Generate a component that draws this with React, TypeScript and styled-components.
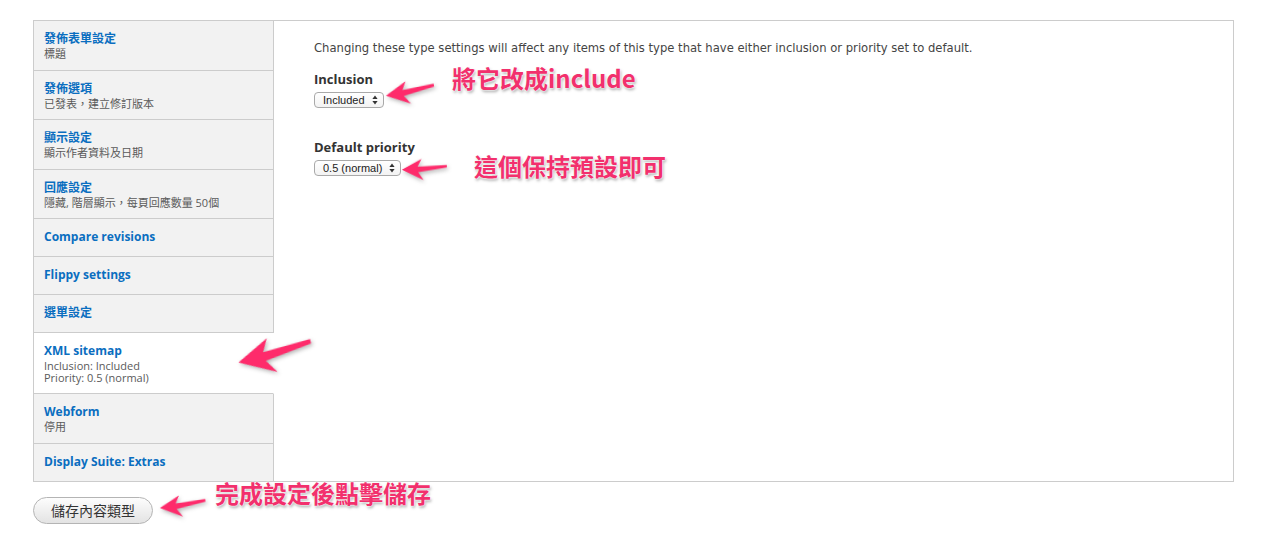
import { Fragment } from "react";
import styled, { createGlobalStyle } from "styled-components";

const GlobalStyle = createGlobalStyle`
  html, body {
    margin: 0;
    padding: 0;
    background: #fff;
  }
  body {
    font-family: "Open Sans", "Noto Sans CJK TC", sans-serif;
    color: #333;
  }
`;

interface TabItem {
  title: string;
  lines: string[];
  active?: boolean;
}

const tabs: TabItem[] = [
  { title: "發佈表單設定", lines: ["標題"] },
  { title: "發佈選項", lines: ["已發表，建立修訂版本"] },
  { title: "顯示設定", lines: ["顯示作者資料及日期"] },
  { title: "回應設定", lines: ["隱藏, 階層顯示，每頁回應數量 50個"] },
  { title: "Compare revisions", lines: [] },
  { title: "Flippy settings", lines: [] },
  { title: "選單設定", lines: [] },
  {
    title: "XML sitemap",
    lines: ["Inclusion: Included", "Priority: 0.5 (normal)"],
    active: true,
  },
  { title: "Webform", lines: ["停用"] },
  { title: "Display Suite: Extras", lines: [] },
];

const SelectArrows = () => (
  <svg width="6" height="10" viewBox="0 0 6 10">
    <path d="M3 0.5 L5.6 4 L0.4 4 Z" fill="#333" />
    <path d="M3 9.5 L5.6 6 L0.4 6 Z" fill="#333" />
  </svg>
);

interface ArrowProps {
  tipX: number;
  tipY: number;
  scale: number;
  angle: number;
}

// pointing-left arrow, tip at (1, 13) in the viewBox
const Arrow = ({ tipX, tipY, scale, angle }: ArrowProps) => (
  <ArrowSvg
    width={52 * scale}
    height={26 * scale}
    viewBox="0 0 52 26"
    style={{
      left: tipX - scale,
      top: tipY - 13 * scale,
      transformOrigin: `${scale}px ${13 * scale}px`,
      transform: `rotate(${angle}deg)`,
    }}
  >
    <path
      d="M1 13 L23 1.5 L18.5 10 L51 8.5 L51 11.5 L19 16 L25 25 Z"
      fill="#fe2b6b"
    />
  </ArrowSvg>
);

const App = () => {
  return (
    <Page>
      <GlobalStyle />
      <Tabs>
        <TabList>
          {tabs.map((tab, i) => (
            <Tab
              key={tab.title}
              $active={!!tab.active}
              $last={i === tabs.length - 1}
            >
              <TabTitle>{tab.title}</TabTitle>
              {tab.lines.length > 0 && (
                <TabSummary>
                  {tab.lines.map((line, j) => (
                    <Fragment key={line}>
                      {j > 0 && <br />}
                      {line}
                    </Fragment>
                  ))}
                </TabSummary>
              )}
            </Tab>
          ))}
          <TabFiller />
        </TabList>
        <Pane>
          <Description>
            Changing these type settings will affect any items of this type
            that have either inclusion or priority set to default.
          </Description>
          <Field>
            <Label>Inclusion</Label>
            <SelectBox>
              <span>Included</span>
              <SelectArrows />
            </SelectBox>
          </Field>
          <Field>
            <Label>Default priority</Label>
            <SelectBox>
              <span>0.5 (normal)</span>
              <SelectArrows />
            </SelectBox>
          </Field>
        </Pane>
      </Tabs>
      <SaveButton>儲存內容類型</SaveButton>

      <Note style={{ left: 452, top: 62 }}>將它改成include</Note>
      <Note style={{ left: 474, top: 150 }}>這個保持預設即可</Note>
      <Note style={{ left: 215, top: 477 }}>完成設定後點擊儲存</Note>

      <Arrow tipX={238} tipY={362} scale={1.5} angle={-13} />
      <Arrow tipX={386} tipY={96} scale={0.98} angle={-9} />
      <Arrow tipX={402} tipY={170} scale={0.9} angle={-1} />
      <Arrow tipX={160} tipY={508} scale={0.92} angle={-6} />
    </Page>
  );
};

const Page = styled.div`
  position: relative;
  width: 1270px;
  height: 551px;
  padding: 20px 0 0 33px;
  box-sizing: border-box;
  overflow: hidden;
`;

const Tabs = styled.div`
  display: flex;
  width: 1201px;
  border: 1px solid #ccc;
  box-sizing: border-box;
  background: #fff;
`;

const TabList = styled.ul`
  list-style: none;
  margin: 0;
  padding: 0;
  width: 240px;
  flex-shrink: 0;
  display: flex;
  flex-direction: column;
  background: #f2f2f2;
`;

const Tab = styled.li<{ $active: boolean; $last: boolean }>`
  padding: 9px 10px 10px 10px;
  border-bottom: ${(p) => (p.$last ? "none" : "1px solid #ccc")};
  border-right: ${(p) => (p.$active ? "1px solid #fff" : "1px solid #ccc")};
  background: ${(p) => (p.$active ? "#fff" : "#f2f2f2")};
`;

const TabFiller = styled.li`
  flex: 1;
  border-right: 1px solid #ccc;
`;

const TabTitle = styled.div`
  font-size: 12px;
  font-weight: 700;
  line-height: 18px;
  color: #0a6ec0;
`;

const TabSummary = styled.div`
  font-size: 11px;
  line-height: 11.5px;
  color: #5a5a5a;
`;

const Pane = styled.div`
  flex: 1;
  padding: 19px 40px;
`;

const Description = styled.p`
  margin: 0 0 16px;
  font-family: "DejaVu Sans", "Noto Sans CJK TC", sans-serif;
  font-size: 11.6px;
  line-height: 16px;
  color: #444;
`;

const Field = styled.div`
  margin-bottom: 31px;
`;

const Label = styled.div`
  font-size: 13px;
  font-weight: 700;
  line-height: 15px;
  color: #333;
  margin-bottom: 0;
`;

const SelectBox = styled.div`
  display: inline-flex;
  align-items: center;
  gap: 7px;
  height: 16px;
  padding: 0 5px 0 8px;
  box-sizing: border-box;
  border: 1px solid #a9a9a9;
  border-radius: 4px;
  background: linear-gradient(#ffffff, #f3f3f3);
  font-family: "Liberation Sans", sans-serif;
  font-size: 11px;
  color: #222;
`;

const SaveButton = styled.button`
  margin-top: 15px;
  width: 120px;
  height: 27px;
  border: 1px solid #b4b4b4;
  border-radius: 14px;
  background: linear-gradient(#fdfdfd, #e3e3e3);
  font-family: "Noto Sans CJK TC", sans-serif;
  font-size: 14px;
  color: #333;
  padding: 0;
`;

const Note = styled.div`
  position: absolute;
  font-family: "Noto Sans CJK TC", "Open Sans", sans-serif;
  font-size: 24px;
  font-weight: 700;
  line-height: 32px;
  color: #f2306d;
  white-space: nowrap;
  text-shadow: 0 0 2px #fff, 0 0 2px #fff, 1px 2px 3px rgba(0, 0, 0, 0.35);
`;

const ArrowSvg = styled.svg`
  position: absolute;
  overflow: visible;
  filter: drop-shadow(1px 2px 2px rgba(0, 0, 0, 0.3));
`;

export default App;
